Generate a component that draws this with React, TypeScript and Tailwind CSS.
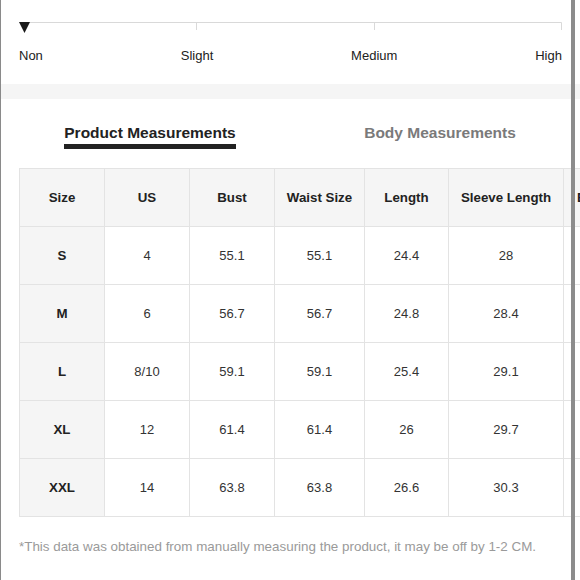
const levels = ["Non", "Slight", "Medium", "High"];

const headers = ["Size", "US", "Bust", "Waist Size", "Length", "Sleeve Length", "Bicep Length"];
const widths = ["w-[85px]", "w-[85px]", "w-[85px]", "w-[90px]", "w-[84px]", "w-[115px]", "w-[111px]"];

// last column sits past the window edge, so its values are left out
const rows = [
  ["S", "4", "55.1", "55.1", "24.4", "28", ""],
  ["M", "6", "56.7", "56.7", "24.8", "28.4", ""],
  ["L", "8/10", "59.1", "59.1", "25.4", "29.1", ""],
  ["XL", "12", "61.4", "61.4", "26", "29.7", ""],
  ["XXL", "14", "63.8", "63.8", "26.6", "30.3", ""],
];

function StretchScale() {
  return (
    <div className="w-[543px]">
      <svg width="543" height="15" viewBox="0 0 543 15" className="block">
        <line x1="5" y1="4.5" x2="542.5" y2="4.5" stroke="#d9d9d9" strokeWidth="1" />
        <line x1="177.5" y1="4.5" x2="177.5" y2="12" stroke="#d9d9d9" strokeWidth="1" />
        <line x1="355.5" y1="4.5" x2="355.5" y2="12" stroke="#d9d9d9" strokeWidth="1" />
        <line x1="542.5" y1="4.5" x2="542.5" y2="12" stroke="#d9d9d9" strokeWidth="1" />
        <polygon points="0,4 11,4 5.5,15" fill="#1a1a1a" />
      </svg>
      <div className="mt-[15px] flex justify-between text-[13px] leading-4 text-[#222]">
        {levels.map((l) => (
          <span key={l}>{l}</span>
        ))}
      </div>
    </div>
  );
}

export default function App() {
  return (
    <div className="relative h-[580px] w-[580px] overflow-hidden bg-white font-['Liberation_Sans',Arial,sans-serif]">
      <div className="h-full w-[700px] border-l border-[#8a8a8a] pt-[18px]">
        <div className="pl-[18px]">
          <StretchScale />
        </div>

        <div className="mt-[20px] h-[15px] bg-[#f5f5f5]" />

        <div className="mt-[25px] flex text-[15.5px] font-bold leading-[18px]">
          <div className="ml-[18px] w-[262px] text-center">
            <span className="inline-block border-b-[5px] border-[#222] pb-[2px] align-top text-[#222]">
              Product Measurements
            </span>
          </div>
          <div className="w-[318px] text-center">
            <span className="inline-block align-top text-[#7a7a7a]">Body Measurements</span>
          </div>
        </div>

        <div className="mt-[19px] pl-[18px]">
          <table className="table-fixed border-collapse text-center text-[13px] text-[#333]">
            <thead>
              <tr>
                {headers.map((h, i) => (
                  <th
                    key={h}
                    className={`${widths[i]} h-[58px] border border-[#e3e3e3] bg-[#f5f5f5] p-0 text-[13.3px] font-bold text-[#222]`}
                  >
                    {h}
                  </th>
                ))}
              </tr>
            </thead>
            <tbody>
              {rows.map((r) => (
                <tr key={r[0]}>
                  {r.map((c, i) =>
                    i === 0 ? (
                      <td
                        key={i}
                        className="h-[58px] border border-[#e3e3e3] bg-[#f5f5f5] p-0 text-[13.3px] font-bold text-[#222]"
                      >
                        {c}
                      </td>
                    ) : (
                      <td key={i} className="h-[58px] border border-[#e3e3e3] p-0">
                        {c}
                      </td>
                    )
                  )}
                </tr>
              ))}
            </tbody>
          </table>
        </div>

        <p className="mt-[22px] pl-[18px] text-[13.4px] leading-4 text-[#9a9a9a]">
          *This data was obtained from manually measuring the product, it may be off by 1-2 CM.
        </p>
      </div>

      {/* window edge over the clipped table */}
      <div className="absolute left-[571px] top-0 h-full w-[4px] bg-[#8c8c8c]" />
    </div>
  );
}
